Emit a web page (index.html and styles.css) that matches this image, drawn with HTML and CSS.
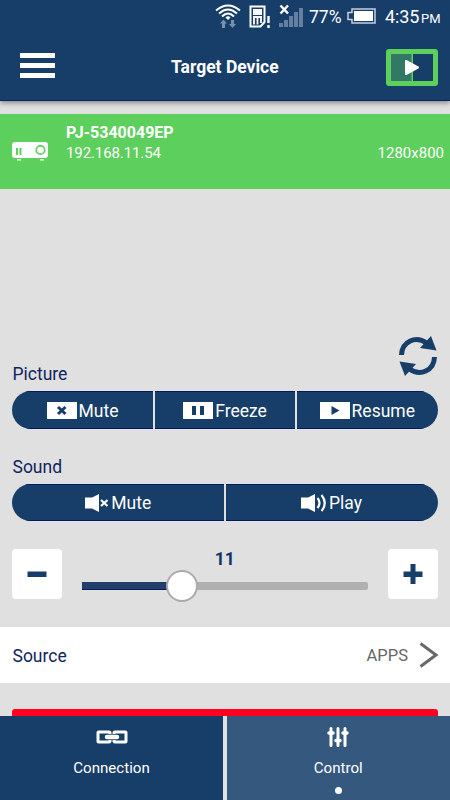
FILE: index.html
```html
<!DOCTYPE html>
<html lang="en">
<head>
<meta charset="utf-8">
<title>Target Device</title>
<link rel="stylesheet" href="styles.css">
</head>
<body>
<div class="screen">
  <div class="top">
    <div class="status">
      <svg class="wifi" width="26" height="27" viewBox="0 0 26 27" fill="none" stroke="#fff" stroke-width="2">
        <path d="M1 7.500Q13-2.500 25 7.500M4 10.500Q13 2.500 22 10.500M7 13.500Q13 7.500 19 13.500"/>
        <path d="M10.500 14.500Q13 12 15.500 14.500L13 17z" fill="#fff" stroke="none"/>
        <path d="M5 20.500L8.500 16.500L12 20.500H10V25H7V20.500zM14 21H16V17H19V21H21L17.500 25z" fill="#7890ad" stroke="none"/>
      </svg>
      <svg class="sim" width="22" height="24" viewBox="0 0 22 24" fill="none" stroke="#fff" stroke-width="2">
        <path d="M1.500 1.500H15.500V17L11.500 21.500H1.500z"/>
        <path d="M4 4H13V10H4z" fill="#fff" stroke="none"/>
        <path d="M5 12V19.500M8.500 12V19.500M12 12V18M4 12H13" stroke-width="1.800"/>
        <path d="M19.500 11V18M19.500 20V23" stroke-width="2.400"/>
      </svg>
      <svg class="signal" width="24" height="24" viewBox="0 0 24 24" fill="#647f9f">
        <path d="M0 19h4v4H0zM5 16h4v7H5zM10 12h4v11h-4zM15 8h4v15h-4zM20 4h4v19h-4z"/>
        <path d="M1.500 1.500L9 9.500M9 1.500L1.500 9.500" stroke="#fff" stroke-width="2.400"/>
      </svg>
      <span class="percent">77%</span>
      <svg class="battery" width="29" height="16" viewBox="0 0 29 16">
        <path d="M5 1H28V15H5V11.500H1V4.500H5z" fill="none" stroke="#c5d0dd" stroke-width="1.500"/>
        <path d="M7 3H26V13H7z" fill="#fff"/>
      </svg>
      <span class="time">4:35</span><span class="pm">PM</span>
    </div>
    <div class="header">
      <div class="menu"><i></i><i></i><i></i></div>
      <h1>Target Device</h1>
      <svg class="present" width="52" height="37" viewBox="0 0 52 37">
        <rect width="52" height="37" rx="3" fill="#5dcf5d"/>
        <path d="M5 5H25.500V32H5z" fill="#327865"/>
        <path d="M27 5H47V32H27z" fill="#173d69"/>
        <path d="M20 12L32 18.500L20 25z" fill="#fff" stroke="#fff" stroke-width="2" stroke-linejoin="round"/>
      </svg>
    </div>
  </div>

  <div class="device">
    <svg class="projector" width="37" height="20" viewBox="0 0 37 20">
      <path d="M3 0H33Q36 0 36 3V13Q36 16 33 16H3Q0 16 0 13V3Q0 0 3 0zM5 17h4v1.500H5zM28 17h4v1.500h-4z" fill="#fff"/>
      <path d="M5 6V13M8.500 6V13" stroke="#5dcf5d" stroke-width="2"/>
      <circle cx="28.500" cy="8" r="4.200" fill="none" stroke="#5dcf5d" stroke-width="1.700"/>
    </svg>
    <div class="info"><b>PJ-5340049EP</b><span>192.168.11.54</span></div>
    <span class="resolution">1280x800</span>
  </div>

  <div class="refresh">
    <svg width="40" height="42" viewBox="0 0 40 42">
      <path d="M3.500 20C4 6 18 0.500 28.500 8" fill="none" stroke="#173d69" stroke-width="5"/>
      <path d="M33 1L38.500 15.500L22 13z" fill="#173d69"/>
      <path d="M36.500 22C36 36 22 41.500 11.500 34" fill="none" stroke="#173d69" stroke-width="5"/>
      <path d="M7 41L1.500 26.500L18 29z" fill="#173d69"/>
    </svg>
  </div>

  <div class="label picture">Picture</div>
  <div class="group three">
    <button><svg width="30" height="17" viewBox="0 0 30 17"><path d="M0 0h30v17H0z" fill="#fff"/><path d="M11 5L18.500 12M18.500 5L11 12" stroke="#173d69" stroke-width="3"/></svg><span>Mute</span></button>
    <button><svg width="30" height="17" viewBox="0 0 30 17"><path d="M0 0h30v17H0z" fill="#fff"/><path d="M9 4h4v9H9zM17 4h4v9h-4z" fill="#173d69"/></svg><span>Freeze</span></button>
    <button><svg width="30" height="17" viewBox="0 0 30 17"><path d="M0 0h30v17H0z" fill="#fff"/><path d="M11.500 4L19.500 8.500L11.500 13z" fill="#173d69"/></svg><span>Resume</span></button>
  </div>

  <div class="label sound">Sound</div>
  <div class="group two">
    <button><svg width="26" height="20" viewBox="0 0 26 20"><path d="M1 4.500H8L15 1V19L8 15.500H1z" fill="#fff"/><path d="M17 7L23.500 13M23.500 7L17 13" stroke="#fff" stroke-width="2.200"/></svg><span>Mute</span></button>
    <button><svg width="27" height="20" viewBox="0 0 27 20"><path d="M0 4.500H7L14 1V19L7 15.500H0z" fill="#fff"/><path d="M16.500 5Q20.500 10 16.500 15M20.500 2Q27 10 20.500 18" fill="none" stroke="#fff" stroke-width="2.200"/></svg><span>Play</span></button>
  </div>

  <div class="volume">
    <div class="step"><svg width="20" height="20" viewBox="0 0 20 20"><path d="M0.500 7.500H19.500V13H0.500z" fill="#173d69"/></svg></div>
    <div class="slider">
      <b>11</b>
      <div class="track"><div class="fill"></div><div class="thumb"></div></div>
    </div>
    <div class="step"><svg width="20" height="20" viewBox="0 0 20 20"><path d="M0.500 7.500H7.500V0H12.500V7.500H19.500V13H12.500V20H7.500V13H0.500z" fill="#173d69"/></svg></div>
  </div>

  <div class="source">
    <span>Source</span><span class="value">APPS</span>
    <svg width="20" height="26" viewBox="0 0 20 26" fill="none" stroke="#686868" stroke-width="3"><path d="M1.500 1.500L17 13L1.500 24.500"/></svg>
  </div>
  <div class="alert"></div>

  <div class="tabs">
    <div class="tab">
      <svg width="32" height="14" viewBox="0 0 32 14" fill="none" stroke="#fff" stroke-width="3"><path d="M14 4V2.500Q14 2 13 2H2.500Q2 2 2 2.500V11.500Q2 12 2.500 12H13Q14 12 14 11.500V10M18 4V2.500Q18 2 19 2H29.500Q30 2 30 2.500V11.500Q30 12 29.500 12H19Q18 12 18 11.500V10"/><path d="M11 7H21" stroke-width="4.500" stroke-linecap="round"/></svg>
      <span>Connection</span>
    </div>
    <div class="tab active">
      <svg width="22" height="22" viewBox="0 0 22 22" fill="none" stroke="#fff" stroke-width="3" stroke-linecap="round"><path d="M4 2.500V19.500M11 2.500V19.500M18 2.500V19.500"/><path d="M2 7H6M9 14.500H13M16 7H20" stroke-width="3.500"/></svg>
      <span>Control</span><i></i>
    </div>
  </div>
</div>
</body>
</html>
```
FILE: styles.css
```css
* { box-sizing: border-box; }
body { margin: 0; font-family: Roboto, sans-serif; color: #10245f; }
svg { display: block; flex: none; }
.screen { width: 450px; height: 800px; background: #e0e0e0; display: flex; flex-direction: column; overflow: hidden; }
.screen > * { flex: none; }
.top { height: 101px; background: #173d69; border-bottom: 1px solid #08265b; box-shadow: 0 2px 5px #0006; color: #fff; }
.status { height: 33px; display: flex; align-items: center; padding-left: 215px; }
.wifi { margin-top: -1px; }
.sim { margin: 0 0 0 8px; }
.signal { margin: -1px 0 0 8px; }
.percent { margin-left: 6px; width: 38px; font-size: 17.5px; }
.battery { margin-top: -2px; }
.time { margin-left: 9px; width: 36px; font-size: 18px; letter-spacing: -.1px; }
.pm { font-size: 13px; padding-top: 3px; }
.header { height: 67px; display: flex; align-items: center; padding: 3px 12px 0 20px; }
.menu { width: 151px; display: grid; gap: 5px; padding-bottom: 5px; }
.menu i { width: 35px; height: 5px; background: #fff; }
h1 { margin: 0 0 2px; font-size: 17.5px; line-height: 22px; font-weight: 700; white-space: nowrap; }
.present { margin: -1px 0 0 auto; }
.device { height: 75px; margin-top: 13px; background: #5dcf5d; color: #fff; display: flex; align-items: flex-start; padding: 8px 6px 0 12px; font-size: 15px; }
.projector { margin-top: 20px; }
.info { margin-left: 17px; flex: 1; line-height: 21px; }
.info b, .info span { display: block; }
.info b { font-size: 16px; }
.info span { letter-spacing: -.1px; }
.resolution { line-height: 21px; margin-top: 21px; }
.refresh { height: 42px; margin-top: 146px; padding-right: 12px; display: flex; justify-content: flex-end; }
.label { height: 24px; line-height: 24px; padding-left: 12.5px; font-size: 17.5px; }
.picture { margin-top: -15px; }
.sound { margin-top: 25px; padding-top: 1px; }
.group { margin: 5px 12.5px 0 12px; display: grid; gap: 2px; border-radius: 19px; overflow: hidden; }
.three { grid-template-columns: 141px 140px 1fr; height: 38px; }
.two { grid-template-columns: 211.5px 1fr; height: 37px; margin-top: 6px; }
.group button { border: solid #03195d; border-width: 1px 0; background: #173d69; color: #fff; padding: 0; font: 17.5px Roboto, sans-serif; display: flex; align-items: center; justify-content: center; gap: 2px; }
.three span { padding-top: 1px; }
.two button { gap: 1px; }
.volume { display: flex; height: 50px; margin: 28px 12.5px 0 12px; gap: 20px; }
.step { width: 50px; border-radius: 4px; background: #fff; display: grid; place-items: center; }
.slider { flex: 1; }
.slider b { display: block; height: 33px; line-height: 21px; text-align: center; font-size: 17.5px; color: #103468; }
.track { height: 8px; position: relative; background: #b0b0b0; border-radius: 2px; }
.fill { width: 100px; height: 8px; background: #213f6a; border-bottom: 1px solid #071c59; }
.thumb { position: absolute; width: 32px; height: 32px; left: 84px; top: -12px; border: 2px solid #aaa; border-radius: 50%; background: #fff; }
.source { height: 56px; margin-top: 28px; padding: 0 11px 0 12.5px; background: #fff; display: flex; align-items: center; font-size: 17.5px; }
.source span { padding-top: 1px; }
.value { margin-left: auto; margin-right: 11px; color: #666; font-size: 16.5px; }
.alert { height: 7px; margin: 26px 12.5px 0 12px; background: #ff0020; border-radius: 3px 3px 0 0; }
.tabs { height: 84px; display: grid; grid-template-columns: 223px 1fr; gap: 3.5px; }
.tab { background: #173d69; color: #fff; display: flex; flex-direction: column; align-items: center; padding-top: 10px; font-size: 15.1px; }
.tab svg { margin: 4px 0; }
.tab span { margin-top: 10px; line-height: 20px; }
.active { background: #35587e; }
.tab.active svg { margin: 0; }
.active i { width: 7px; height: 7px; border-radius: 50%; background: #fff; margin-top: 9px; }
```
